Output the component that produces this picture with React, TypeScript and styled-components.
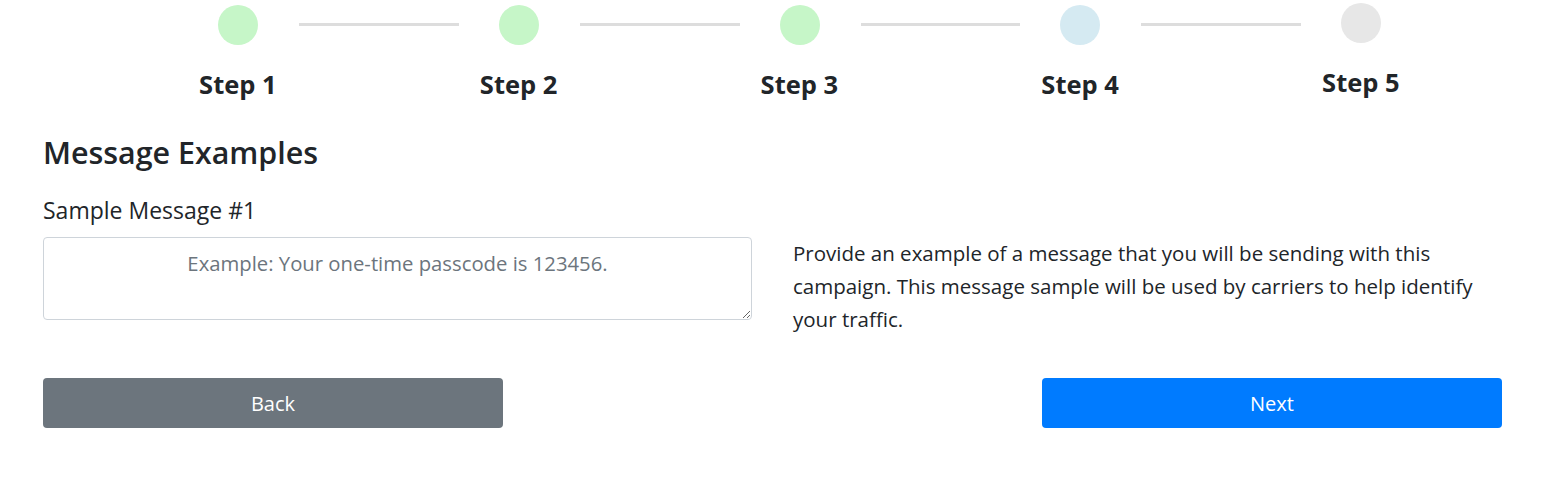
import React, { FC } from "react";
import styled, { createGlobalStyle } from "styled-components";

const GlobalStyle = createGlobalStyle`
  body {
    margin: 0;
    background: #ffffff;
    color: #212529;
    font-family: "Open Sans", "Noto Sans", sans-serif;
  }
  * {
    box-sizing: border-box;
  }
`;

const Page = styled.div`
  width: 1553px;
  padding: 5px 51px 0 43px;
`;

// stepper: dots + connectors on one row, labels on the next
const Track = styled.div`
  display: flex;
  align-items: center;
  padding-left: 175px;
  height: 40px;
`;

const Dot = styled.div<{ color: string; lift?: boolean }>`
  flex: none;
  width: 40px;
  height: 40px;
  border-radius: 50%;
  background: ${(p) => p.color};
  transform: ${(p) => (p.lift ? "translateY(-2px)" : "none")};
`;

const Connector = styled.div`
  flex: none;
  width: 159.75px;
  height: 3px;
  margin: 0 40px 0 41px;
  background: #dddddd;
  transform: translateY(-1px);
`;

const Labels = styled.div`
  display: grid;
  grid-template-columns: repeat(5, 280.75px);
  margin: 25px 0 0 54.5px;
`;

const StepLabel = styled.h4<{ lift?: boolean }>`
  margin: 0;
  font-size: 25.5px;
  font-weight: 700;
  line-height: 29px;
  text-align: center;
  transform: ${(p) => (p.lift ? "translateY(-2px)" : "none")};
`;

const Heading = styled.h3`
  margin: 36px 0 0;
  font-size: 30.4px;
  font-weight: 600;
  line-height: 36px;
`;

const FieldLabel = styled.label`
  display: block;
  margin-top: 25px;
  font-size: 23px;
  line-height: 28px;
`;

const FieldRow = styled.div`
  display: grid;
  grid-template-columns: 709px 709px;
  column-gap: 41px;
  align-items: start;
  margin-top: 13px;
`;

const TextArea = styled.textarea`
  display: block;
  width: 709px;
  height: 83px;
  padding: 11px 16px 8px;
  border: 1px solid #ced4da;
  border-radius: 4px;
  font-family: inherit;
  font-size: 20.3px;
  line-height: 28px;
  text-align: center;
  color: #495057;
  resize: vertical;
  &::placeholder {
    color: #6c757d;
  }
`;

const Hint = styled.p`
  margin: 0;
  font-size: 20.5px;
  line-height: 33px;
  color: #212529;
`;

const Actions = styled.div`
  display: flex;
  justify-content: space-between;
  margin-top: 42px;
`;

const Button = styled.button<{ variant: "primary" | "secondary" }>`
  width: 460px;
  height: 50px;
  border: none;
  border-radius: 4px;
  font-family: inherit;
  font-size: 20px;
  color: #ffffff;
  background: ${(p) => (p.variant === "primary" ? "#007bff" : "#6c757d")};
  cursor: pointer;
`;

const steps = [
  { label: "Step 1", color: "#c6f6c8" },
  { label: "Step 2", color: "#c6f6c8" },
  { label: "Step 3", color: "#c6f6c8" },
  { label: "Step 4", color: "#d5eaf2" },
  { label: "Step 5", color: "#e7e7e7" },
];

const App: FC = () => {
  return (
    <>
      <GlobalStyle />
      <Page>
        <Track>
          {steps.map((s, i) => (
            <React.Fragment key={s.label}>
              <Dot color={s.color} lift={i === steps.length - 1} />
              {i < steps.length - 1 && <Connector />}
            </React.Fragment>
          ))}
        </Track>
        <Labels>
          {steps.map((s, i) => (
            <StepLabel key={s.label} lift={i === steps.length - 1}>
              {s.label}
            </StepLabel>
          ))}
        </Labels>

        <Heading>Message Examples</Heading>
        <FieldLabel htmlFor="sample1">Sample Message #1</FieldLabel>
        <FieldRow>
          <TextArea
            id="sample1"
            placeholder="Example: Your one-time passcode is 123456."
          />
          <Hint>
            Provide an example of a message that you will be sending with this
            campaign. This message sample will be used by carriers to help
            identify your traffic.
          </Hint>
        </FieldRow>

        <Actions>
          <Button variant="secondary">Back</Button>
          <Button variant="primary">Next</Button>
        </Actions>
      </Page>
    </>
  );
};

export default App;
